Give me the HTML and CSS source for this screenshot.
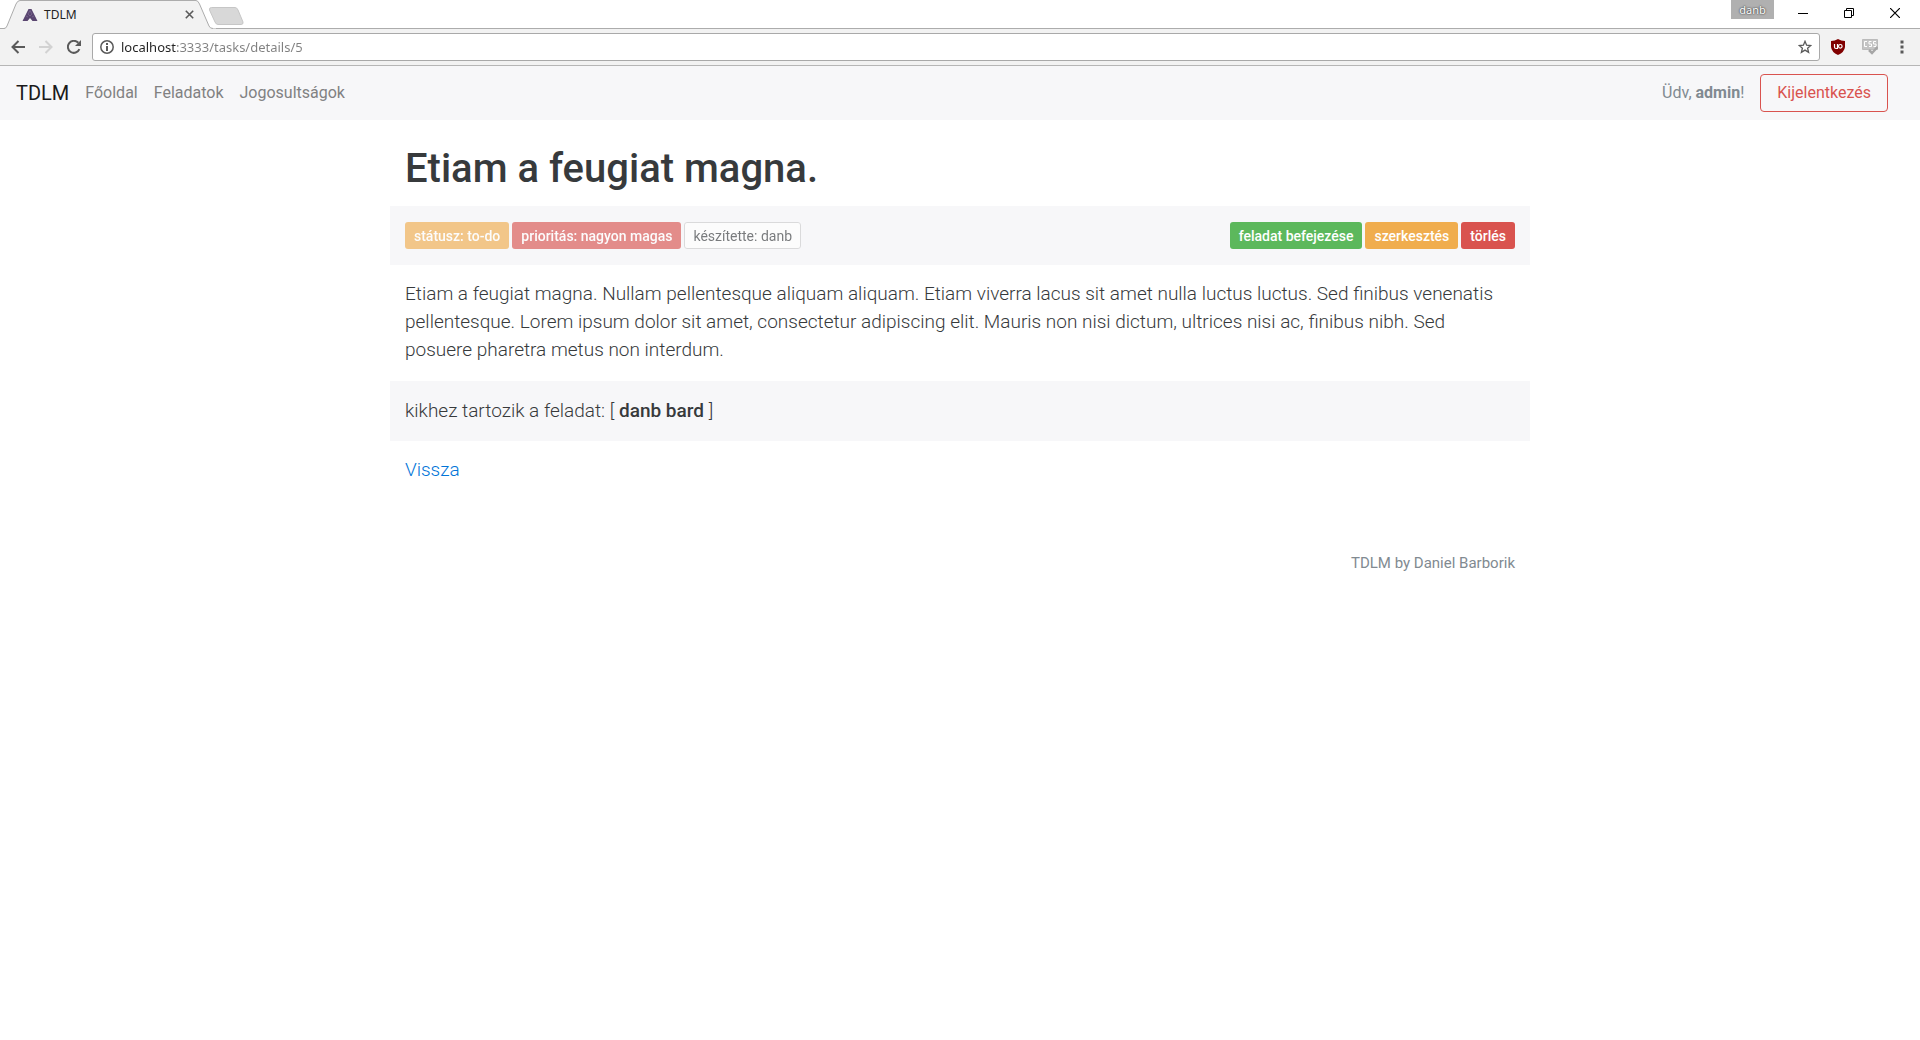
FILE: index.html
```html
<!DOCTYPE html>
<html lang="hu">
<head>
<meta charset="utf-8">
<meta name="viewport" content="width=device-width, initial-scale=1">
<title>TDLM</title>
<link rel="stylesheet" href="styles.css">
</head>
<body>
<header class="browser">
  <div class="tab-strip">
    <div class="tab">
      <svg class="tab-shape" width="212" height="29" viewBox="0 0 212 29" aria-hidden="true"><path d="M0 29L.5 28.5Q2 28 3 26L12 4Q13.500.5 16 .5H192Q194 .5 195.500 4L205 26Q206 28.500 209 28.500H212V29Z" fill="#f2f2f2"/><path d="M0 28.500Q2 28.500 3 26L12 4Q13.500 .5 16 .5H192Q194 .5 195.500 4L205 26Q206 28.500 209 28.500" fill="none" stroke="#acacac"/></svg>
      <svg class="favicon" width="16" height="14" viewBox="0 0 16 14" aria-hidden="true"><path d="M6.500 1h3L15.500 13H10.500L8 10 5.500 13H.5z" fill="#5a4670"/><path d="M8 2.500L6 6l2 2 2-2zM4 8l2 1M12 8l-2 1" fill="none" stroke="#85749a" stroke-width=".6"/></svg>
      <span class="tab-title">TDLM</span>
      <button class="tab-close" aria-label="Lap bezárása"><svg width="9" height="9" viewBox="0 0 9 9"><path d="M.8.8l7.400 7.400M8.200.8L.8 8.200" stroke="#5a5a5a" stroke-width="1.600"/></svg></button>
    </div>
    <button class="new-tab" aria-label="Új lap"><svg width="35" height="18" viewBox="0 0 35 18"><path d="M2.500.5H26Q28 .5 29 3L34 15Q34.500 17.500 32 17.500H9Q7 17.500 6 15L.5 3Q0 .5 2.500 .5Z" fill="#d8d8d8" stroke="#c6c6c6"/></svg></button>
    <div class="window-controls">
      <button class="profile">danb</button>
      <button class="window-button" aria-label="Kis méret"><svg width="10" height="10" viewBox="0 0 10 10"><path d="M0 5.500h10" stroke="#000"/></svg></button>
      <button class="window-button" aria-label="Előző méret"><svg width="10" height="10" viewBox="0 0 10 10"><path d="M.5 2.500h7v7h-7zM2.500 2.500v-2h7v7h-2" fill="none" stroke="#000"/></svg></button>
      <button class="window-button" aria-label="Bezárás"><svg width="10" height="10" viewBox="0 0 10 10"><path d="M0 0l10 10M10 0L0 10" stroke="#000" stroke-width="1.200"/></svg></button>
    </div>
  </div>
  <div class="toolbar">
    <button class="tool" aria-label="Vissza"><svg width="14" height="14" viewBox="0 0 14 14"><path d="M14 7H1.500M7.500 1L1.500 7l6 6" fill="none" stroke="#5a5a5a" stroke-width="2"/></svg></button>
    <button class="tool" aria-label="Előre"><svg width="14" height="14" viewBox="0 0 14 14"><path d="M0 7h12.500M6.500 1l6 6-6 6" fill="none" stroke="#d2d2d2" stroke-width="2"/></svg></button>
    <button class="tool" aria-label="Újratöltés"><svg width="14" height="14" viewBox="0 0 14 14"><path d="M12.400 9.200A6 6 0 1 1 11.300 2.800" fill="none" stroke="#5a5a5a" stroke-width="2"/><path d="M14 0v6H8z" fill="#5a5a5a"/></svg></button>
    <div class="address-bar">
      <svg width="14" height="14" viewBox="0 0 14 14" aria-hidden="true"><circle cx="7" cy="7" r="6.200" fill="none" stroke="#5a5a5a" stroke-width="1.500"/><path d="M7 3v2M7 6v5" stroke="#5a5a5a" stroke-width="2"/></svg>
      <input class="address" type="text" aria-label="Cím" value="localhost:3333/tasks/details/5">
      <button class="bookmark" aria-label="Könyvjelző"><svg width="14" height="14" viewBox="0 0 14 14"><path d="M7 1.300l1.600 3.900 4.200.3-3.200 2.700 1 4.100L7 10.100l-3.600 2.200 1-4.100L1.200 5.500l4.200-.3z" fill="none" stroke="#5a5a5a" stroke-width="1.300"/></svg></button>
    </div>
    <div class="extensions">
      <button class="tool" aria-label="uBlock Origin"><svg width="14" height="16" viewBox="0 0 14 16"><path d="M7 0Q10 2 14 2V8Q13.500 13 7 16 .5 13 0 8V2Q4 2 7 0Z" fill="#800000"/><path d="M3.500 5v3Q3.500 9.500 5 9.500H6.500V5" fill="none" stroke="#fff" stroke-width="1.200"/><circle cx="9.300" cy="7.300" r="1.800" fill="none" stroke="#fff" stroke-width="1.200"/></svg></button>
      <button class="tool" aria-label="CSS"><svg width="16" height="16" viewBox="0 0 16 16"><path d="M.5.5h15v10h-15z" fill="#c4c4c4" stroke="#bbb"/><path d="M5 2.500H2.500v5H5M9.500 2.500H7V5h2.500v2.500H7M14 2.500H11.500V5H14v2.500H11.500" fill="none" stroke="#fff"/><path d="M7 11l3 3 5.500-6" fill="none" stroke="#a6a6a6" stroke-width="2.500"/></svg></button>
      <button class="tool" aria-label="Menü"><svg width="4" height="14" viewBox="0 0 4 14"><path d="M.5.5h3v3h-3zM.5 5.500h3v3h-3zM.5 10.500h3v3h-3z" fill="#5a5a5a"/></svg></button>
    </div>
  </div>
</header>

<nav class="navbar">
  <a class="brand" href="#">TDLM</a>
  <a class="nav-link" href="#">Főoldal</a>
  <a class="nav-link" href="#">Feladatok</a>
  <a class="nav-link" href="#">Jogosultságok</a>
  <span class="greeting">Üdv, <strong>admin</strong>!</span>
  <button class="logout">Kijelentkezés</button>
</nav>

<main class="container">
  <h1 class="title">Etiam a feugiat magna.</h1>
  <div class="panel">
    <div class="group">
      <button class="btn warning" disabled>státusz: to-do</button>
      <button class="btn danger" disabled>prioritás: nagyon magas</button>
      <button class="btn secondary" disabled>készítette: danb</button>
    </div>
    <div class="group">
      <button class="btn success">feladat befejezése</button>
      <button class="btn warning">szerkesztés</button>
      <button class="btn danger">törlés</button>
    </div>
  </div>
  <p class="lead">Etiam a feugiat magna. Nullam pellentesque aliquam aliquam. Etiam viverra lacus sit amet nulla luctus luctus. Sed finibus venenatis pellentesque. Lorem ipsum dolor sit amet, consectetur adipiscing elit. Mauris non nisi dictum, ultrices nisi ac, finibus nibh. Sed posuere pharetra metus non interdum.</p>
  <div class="panel">
    <p class="members">kikhez tartozik a feladat: [ <strong>danb bard</strong> ]</p>
  </div>
  <p class="lead"><a class="back" href="#">Vissza</a></p>
  <footer class="footer">TDLM by Daniel Barborik</footer>
</main>
</body>
</html>
```
FILE: styles.css
```css
* { box-sizing: border-box; }

body {
  margin: 0;
  background: #fff;
  color: #373a3c;
  font-family: Roboto, "Liberation Sans", sans-serif;
  font-size: 16px;
  line-height: 24px;
}

button {
  margin: 0;
  padding: 0;
  border: 0;
  background: none;
  font: inherit;
}

svg { display: block; }
a { text-decoration: none; }

/* Browser window */
.browser {
  font-family: "Noto Sans", "Open Sans", sans-serif;
  font-size: 12px;
  line-height: 16px;
}

.tab-strip {
  display: flex;
  height: 29px;
  box-shadow: inset 0 -1px #acacac;
}

.tab {
  position: relative;
  display: flex;
  align-items: center;
  width: 212px;
  margin-left: 4px;
  padding: 0 22px 0 18px;
}

.tab-shape { position: absolute; left: 0; top: 0; }
.favicon, .tab-title, .tab-close { position: relative; }
.tab-title { flex: 1; margin-left: 6px; color: #222; }

.new-tab { align-self: flex-start; margin: 7px 0 0 -7px; }

.window-controls { display: flex; margin-left: auto; padding-right: 2px; }

.profile {
  width: 43px;
  height: 19px;
  margin-right: 6px;
  background: #b0b0b0;
  color: #fff;
  font-size: 11px;
  line-height: 18px;
  text-shadow: 0 0 2px #333, 0 0 1px #555;
}

.window-button {
  display: grid;
  place-items: center;
  width: 46px;
  height: 26px;
}

.toolbar {
  display: flex;
  align-items: center;
  height: 37px;
  padding-left: 4px;
  border-bottom: 1px solid #b6b6b6;
  background: #f2f2f2;
}

.tool {
  display: grid;
  place-items: center;
  width: 28px;
  height: 28px;
}

.address-bar {
  display: flex;
  flex: 1;
  align-items: center;
  height: 28px;
  margin-left: 4px;
  padding: 0 7px;
  border: 1px solid #a9a9a9;
  border-radius: 3px;
  background: #fff;
}

/* The host name is dark, the rest of the address is grey */
.address {
  flex: 1;
  min-width: 0;
  margin: 0 7px;
  padding: 0;
  border: 0;
  outline: 0;
  background: linear-gradient(90deg, #222 56px, #808080 56px);
  -webkit-background-clip: text;
  background-clip: text;
  color: transparent;
  font: 13px/20px "Noto Sans", "Open Sans", sans-serif;
}

.extensions { display: flex; gap: 4px; padding: 0 4px; }

/* Page navigation */
.navbar {
  display: flex;
  align-items: center;
  gap: 16px;
  padding: 8px 32px 8px 16px;
  background: #f7f7f9;
}

.brand { color: #1a1a1a; font-size: 20px; }
.nav-link { color: #818182; }
.greeting { margin-left: auto; color: #818a91; }

.logout {
  height: 38px;
  padding: 0 16px;
  border: 1px solid #d9534f;
  border-radius: 4px;
  color: #d9534f;
}

/* Task details */
.container {
  width: 100%;
  max-width: 1140px;
  margin: 25px auto 0;
}

.title {
  margin: 0 15px 13px;
  font-size: 40px;
  font-weight: 500;
  line-height: 48px;
}

.panel {
  display: flex;
  align-items: center;
  justify-content: space-between;
  padding: 16px 15px;
  background: #f7f7f9;
}

.group { display: flex; gap: 3px; }

.btn {
  height: 27px;
  padding: 0 8px;
  border: 1px solid transparent;
  border-radius: 3px;
  color: #fff;
  font-size: 14px;
  font-weight: 500;
  line-height: 20px;
}

.btn:disabled { opacity: 0.65; }
.success { background: #5cb85c; }
.warning { background: #f0ad4e; }
.danger { background: #d9534f; }

.secondary {
  border-color: #ccc;
  background: #fff;
  color: #373a3c;
  font-weight: 400;
}

.lead, .members {
  margin: 0;
  font-size: 19px;
  font-weight: 300;
  line-height: 28px;
}

.lead { padding: 15px 15px 17px; }
.members strong { font-weight: 500; }
.back { color: #0275d8; }

.footer {
  margin: 50px 15px 0;
  color: #818a91;
  font-size: 15px;
  text-align: right;
}
```
